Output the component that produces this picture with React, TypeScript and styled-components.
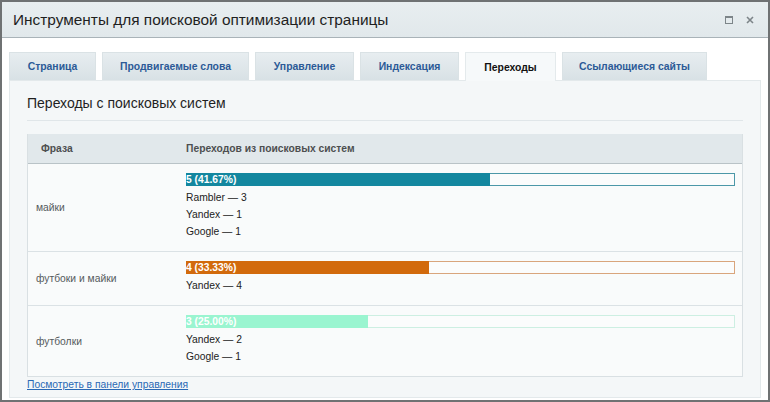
import styled, { createGlobalStyle } from "styled-components";

const GlobalStyle = createGlobalStyle`
    html, body {
        margin: 0;
        padding: 0;
        background: #ffffff;
    }
    body {
        font-family: "Liberation Sans", Arial, sans-serif;
    }
`;

const Window = styled.div`
    box-sizing: border-box;
    width: 770px;
    height: 402px;
    border: 2px solid #6f7273;
    background: #ffffff;
    display: flex;
    flex-direction: column;
`;

const TitleBar = styled.div`
    height: 35px;
    flex-shrink: 0;
    display: flex;
    align-items: center;
    padding: 0 14px 0 11px;
    background: linear-gradient(#e8eef0, #e1e8eb);
    border-bottom: 1px solid #a9b3b8;
`;

const Title = styled.h1`
    flex: 1;
    margin: 0;
    font-size: 15.4px;
    font-weight: normal;
    color: #1f1f1f;
`;

const TitleButtons = styled.div`
    display: flex;
    align-items: center;
    gap: 13px;
    color: #7d8589;
`;

const Body = styled.div`
    flex: 1;
    display: flex;
    flex-direction: column;
    padding: 14px 7px 0 7px;
`;

const Tabs = styled.div`
    display: flex;
    gap: 6px;
    height: 28px;
`;

const Tab = styled.div<{ $active?: boolean; $width: number }>`
    box-sizing: border-box;
    width: ${(p) => p.$width}px;
    display: flex;
    align-items: center;
    justify-content: center;
    font-size: 10.4px;
    font-weight: bold;
    color: ${(p) => (p.$active ? "#111111" : "#2c5a97")};
    background: ${(p) =>
        p.$active ? "#f6f9fa" : "linear-gradient(#e7edf0, #d8e1e5)"};
    border: 1px solid ${(p) => (p.$active ? "#e4eaec" : "#dae2e5")};
    border-bottom: none;
    height: ${(p) => (p.$active ? "29px" : "28px")};
    position: relative;
    z-index: ${(p) => (p.$active ? 1 : 0)};
`;

const Panel = styled.div`
    box-sizing: border-box;
    flex: 1;
    margin-bottom: 2px;
    padding: 0 17px 0 17px;
    background: #f4f7f8;
    border: 1px solid #e3e9eb;
`;

const Heading = styled.h2`
    margin: 0;
    padding: 13px 0 8px;
    line-height: 18px;
    font-size: 14px;
    font-weight: normal;
    color: #1f1f1f;
    border-bottom: 1px solid #e0e6e9;
`;

const Table = styled.div`
    margin-top: 13px;
    border: 1px solid #d9e0e3;
    border-top: none;
    background: #f9fbfb;
`;

const Row = styled.div<{ $head?: boolean }>`
    display: grid;
    grid-template-columns: 158px 1fr;
    align-items: center;
    border-bottom: 1px solid ${(p) => (p.$head ? "#b9c3c7" : "#dbe2e5")};
    ${(p) => (p.$head ? "height: 29px; background: #e1e8eb;" : "")}
    &:last-child {
        border-bottom: none;
    }
`;

const HeadCell = styled.div<{ $indent: number }>`
    padding-left: ${(p) => p.$indent}px;
    font-size: 10.3px;
    font-weight: bold;
    color: #4d4f50;
`;

const Phrase = styled.div`
    padding-left: 8px;
    font-size: 10.3px;
    color: #555a5c;
`;

const Stats = styled.div`
    padding: 9px 7px 11px 0;
`;

const Bar = styled.div<{ $border: string }>`
    box-sizing: border-box;
    height: 13px;
    margin-bottom: 3px;
    background: #fbfcfc;
    border: 1px solid ${(p) => p.$border};
    display: flex;
`;

const Fill = styled.div<{ $color: string }>`
    background: ${(p) => p.$color};
    color: #ffffff;
    font-size: 10.3px;
    font-weight: bold;
    white-space: nowrap;
    margin: -1px 0 0 -1px;
    height: 13px;
    line-height: 13px;
`;

const Line = styled.div`
    font-size: 10.3px;
    line-height: 17px;
    color: #222222;
`;

const MoreLink = styled.a`
    display: block;
    margin: 1px 0 0;
    font-size: 10.3px;
    line-height: 14px;
    color: #2a69b5;
    text-decoration: underline;
`;

interface IRow {
    phrase: string;
    count: number;
    percent: string;
    color: string;
    border: string;
    engines: string[];
}

const rows: IRow[] = [
    {
        phrase: "майки",
        count: 5,
        percent: "41.67%",
        color: "#13879f",
        border: "#4c98a8",
        engines: ["Rambler — 3", "Yandex — 1", "Google — 1"],
    },
    {
        phrase: "футбоки и майки",
        count: 4,
        percent: "33.33%",
        color: "#d26a0c",
        border: "#d9a57c",
        engines: ["Yandex — 4"],
    },
    {
        phrase: "футболки",
        count: 3,
        percent: "25.00%",
        color: "#9af5d0",
        border: "#cdefe2",
        engines: ["Yandex — 2", "Google — 1"],
    },
];

const tabs = [
    { title: "Страница", width: 87 },
    { title: "Продвигаемые слова", width: 147 },
    { title: "Управление", width: 99 },
    { title: "Индексация", width: 99 },
    { title: "Переходы", width: 91 },
    { title: "Ссылающиеся сайты", width: 145 },
];

function App() {
    return (
        <>
            <GlobalStyle />
            <Window>
                <TitleBar>
                    <Title>Инструменты для поисковой оптимизации страницы</Title>
                    <TitleButtons>
                        <svg width="8" height="8" viewBox="0 0 8 8">
                            <rect x="0.5" y="0.5" width="7" height="7" fill="none" stroke="currentColor" strokeWidth="1" />
                            <line x1="0" y1="1.5" x2="8" y2="1.5" stroke="currentColor" strokeWidth="1" />
                        </svg>
                        <svg width="8" height="8" viewBox="0 0 8 8">
                            <path d="M1 1 L7 7 M7 1 L1 7" stroke="currentColor" strokeWidth="1.6" />
                        </svg>
                    </TitleButtons>
                </TitleBar>
                <Body>
                    <Tabs>
                        {tabs.map((t) => (
                            <Tab key={t.title} $width={t.width} $active={t.title === "Переходы"}>
                                {t.title}
                            </Tab>
                        ))}
                    </Tabs>
                    <Panel>
                        <Heading>Переходы с поисковых систем</Heading>
                        <Table>
                            <Row $head>
                                <HeadCell $indent={13}>Фраза</HeadCell>
                                <HeadCell $indent={0}>Переходов из поисковых систем</HeadCell>
                            </Row>
                            {rows.map((r) => (
                                <Row key={r.phrase}>
                                    <Phrase>{r.phrase}</Phrase>
                                    <Stats>
                                        <Bar $border={r.border}>
                                            <Fill $color={r.color} style={{ width: `${(r.count / 9) * 100}%` }}>
                                                {r.count} ({r.percent})
                                            </Fill>
                                        </Bar>
                                        {r.engines.map((e) => (
                                            <Line key={e}>{e}</Line>
                                        ))}
                                    </Stats>
                                </Row>
                            ))}
                        </Table>
                        <MoreLink href="#">Посмотреть в панели управления</MoreLink>
                    </Panel>
                </Body>
            </Window>
        </>
    );
}

export default App;
